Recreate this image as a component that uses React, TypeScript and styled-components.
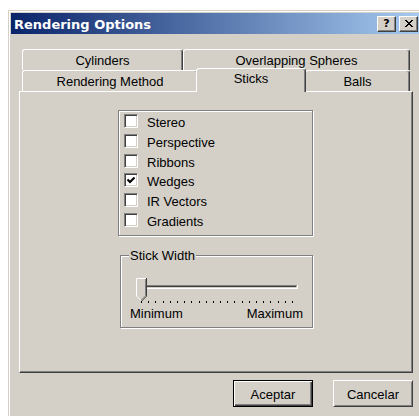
import styled, { createGlobalStyle } from 'styled-components';

const GlobalStyle = createGlobalStyle`
   html, body {
      margin: 0;
      padding: 0;
      background: #ffffff;
      overflow: hidden;
   }
   body {
      font-family: 'Liberation Sans', Arial, sans-serif;
      font-size: 13px;
      color: #000000;
   }
`;

const Window = styled.div`
   box-sizing: border-box;
   margin: 10px 0 0 8px;
   width: 415px;
   height: 420px;
   padding: 2px;
   background: #d4d0c8;
   border: 1px solid;
   border-color: #d4d0c8 #404040 #404040 #d4d0c8;
   box-shadow: inset 1px 1px #ffffff, inset -1px -1px #808080;
`;

const TitleBar = styled.div`
   height: 21px;
   display: flex;
   align-items: center;
   padding: 0 2px 0 3px;
   background: linear-gradient(90deg, #0a246a 0%, #a6caf0 100%);
`;

const Title = styled.span`
   flex: 1;
   padding-top: 1px;
   font-family: 'DejaVu Sans', Tahoma, sans-serif;
   font-weight: bold;
   font-size: 13px;
   color: #ffffff;
`;

const CaptionButton = styled.div`
   box-sizing: border-box;
   width: 19px;
   height: 16px;
   margin-left: 3px;
   display: flex;
   align-items: center;
   justify-content: center;
   background: #d4d0c8;
   border: 1px solid;
   border-color: #ffffff #404040 #404040 #ffffff;
   box-shadow: inset -1px -1px #808080;
   font-family: 'DejaVu Sans', sans-serif;
   font-weight: bold;
   font-size: 11px;
   line-height: 14px;
`;

const Content = styled.div`
   padding: 15px 0 0 8px;
`;

const TabRow = styled.div`
   display: flex;
   height: 21px;
   margin-left: 3px;
`;

const Tab = styled.div<{ $w: number; $active?: boolean }>`
   position: relative;
   box-sizing: border-box;
   width: ${(p) => p.$w}px;
   padding-top: ${(p) => (p.$active ? 2 : 3)}px;
   line-height: 16px;
   text-align: center;
   background: #d4d0c8;
   border: 1px solid;
   border-bottom: none;
   border-color: #ffffff #404040 transparent #ffffff;
   border-radius: 3px 3px 0 0;
   box-shadow: inset -1px 0 #808080;
   ${(p) =>
      p.$active &&
      `
      z-index: 1;
      margin: -2px -1px -1px -2px;
   `}
`;

const Panel = styled.div`
   box-sizing: border-box;
   width: 394px;
   height: 282px;
   padding: 18px 0 0 98px;
   border: 1px solid;
   border-color: #ffffff #404040 #404040 #ffffff;
   box-shadow: inset -1px -1px #808080;
`;

const GroupBox = styled.div<{ $w: number; $h: number }>`
   position: relative;
   box-sizing: border-box;
   width: ${(p) => p.$w}px;
   height: ${(p) => p.$h}px;
   border: 1px solid #808080;
   box-shadow: inset 1px 1px #ffffff, 1px 1px #ffffff;
`;

const CheckList = styled(GroupBox)`
   padding: 3px 0 0 5px;
`;

const WidthGroup = styled(GroupBox)`
   margin: 19px 0 0 2px;
   padding: 20px 9px 0 9px;
`;

const GroupCaption = styled.span`
   position: absolute;
   top: -8px;
   left: 8px;
   padding: 0 1px;
   line-height: 15px;
   background: #d4d0c8;
`;

const CheckRow = styled.div`
   display: flex;
   align-items: flex-start;
   height: 19.8px;
`;

const CheckBox = styled.div`
   box-sizing: border-box;
   width: 14px;
   height: 14px;
   display: flex;
   align-items: center;
   justify-content: center;
   background: #ffffff;
   border: 1px solid;
   border-color: #808080 #ffffff #ffffff #808080;
   box-shadow: inset 1px 1px #404040, inset -1px -1px #d4d0c8;
`;

const CheckLabel = styled.span`
   margin-left: 9px;
   padding-top: 1px;
   line-height: 15px;
`;

const SliderArt = styled.svg`
   display: block;
   margin-left: 3px;
`;

const RangeLabels = styled.div`
   display: flex;
   justify-content: space-between;
   margin-top: 2px;
   line-height: 15px;
`;

const ButtonRow = styled.div`
   width: 394px;
   margin-top: 7px;
   display: flex;
   justify-content: flex-end;
   gap: 20px;
`;

const Button = styled.div<{ $default?: boolean }>`
   box-sizing: border-box;
   width: 80px;
   height: 27px;
   padding-top: 1px;
   display: flex;
   align-items: center;
   justify-content: center;
   background: #d4d0c8;
   border: 1px solid;
   border-color: ${(p) =>
      p.$default ? '#000000' : '#ffffff #404040 #404040 #ffffff'};
   box-shadow: ${(p) =>
      p.$default
         ? 'inset 1px 1px #ffffff, inset -1px -1px #404040, inset -2px -2px #808080'
         : 'inset 1px 1px #d4d0c8, inset -1px -1px #808080'};
`;

const options = [
   { label: 'Stereo', checked: false },
   { label: 'Perspective', checked: false },
   { label: 'Ribbons', checked: false },
   { label: 'Wedges', checked: true },
   { label: 'IR Vectors', checked: false },
   { label: 'Gradients', checked: false },
];

function CloseGlyph() {
   return (
      <svg width="8" height="7" viewBox="0 0 8 7">
         <path d="M0 0 L7 7 M1 0 L8 7 M7 0 L0 7 M8 0 L1 7" stroke="#000" strokeWidth="1" />
      </svg>
   );
}

function CheckMark() {
   return (
      <svg width="8" height="7" viewBox="0 0 8 7">
         <path d="M0.5 2.5 L3 5 L7.5 0.5" fill="none" stroke="#000" strokeWidth="2" />
      </svg>
   );
}

function StickSlider() {
   const ticks = Array.from({ length: 22 }, (_, i) => 8 + Math.round((i * 151) / 21));
   return (
      <SliderArt width="170" height="28" viewBox="0 0 170 28">
         {/* groove */}
         <rect x="8" y="9" width="156" height="1" fill="#808080" />
         <rect x="8" y="9" width="1" height="3" fill="#808080" />
         <rect x="9" y="10" width="154" height="1" fill="#404040" />
         <rect x="8" y="12" width="157" height="1" fill="#ffffff" />
         <rect x="164" y="9" width="1" height="4" fill="#ffffff" />
         {/* thumb */}
         <polygon points="3,2 14,2 14,20 8.5,25.5 3,20" fill="#d4d0c8" />
         <path d="M3.5 20 V2.5 H13" fill="none" stroke="#ffffff" />
         <path d="M3.5 20 L8 24.5" fill="none" stroke="#ffffff" />
         <path d="M13.5 2 V20.2 L8.5 25.2" fill="none" stroke="#404040" />
         <path d="M12.5 3 V19.8 L8.5 23.8" fill="none" stroke="#808080" />
         {ticks.map((x) => (
            <rect key={x} x={x} y="25" width="1" height="2" fill="#000" />
         ))}
      </SliderArt>
   );
}

export default function App() {
   return (
      <>
         <GlobalStyle />
         <Window>
            <TitleBar>
               <Title>Rendering Options</Title>
               <CaptionButton>?</CaptionButton>
               <CaptionButton>
                  <CloseGlyph />
               </CaptionButton>
            </TitleBar>
            <Content>
               <TabRow>
                  <Tab $w={161}>Cylinders</Tab>
                  <Tab $w={227}>Overlapping Spheres</Tab>
               </TabRow>
               <TabRow>
                  <Tab $w={176}>Rendering Method</Tab>
                  <Tab $w={110} $active>
                     Sticks
                  </Tab>
                  <Tab $w={105}>Balls</Tab>
               </TabRow>
               <Panel>
                  <CheckList $w={195} $h={126}>
                     {options.map((o) => (
                        <CheckRow key={o.label}>
                           <CheckBox>{o.checked && <CheckMark />}</CheckBox>
                           <CheckLabel>{o.label}</CheckLabel>
                        </CheckRow>
                     ))}
                  </CheckList>
                  <WidthGroup $w={193} $h={73}>
                     <GroupCaption>Stick Width</GroupCaption>
                     <StickSlider />
                     <RangeLabels>
                        <span>Minimum</span>
                        <span>Maximum</span>
                     </RangeLabels>
                  </WidthGroup>
               </Panel>
               <ButtonRow>
                  <Button $default>Aceptar</Button>
                  <Button>Cancelar</Button>
               </ButtonRow>
            </Content>
         </Window>
      </>
   );
}
